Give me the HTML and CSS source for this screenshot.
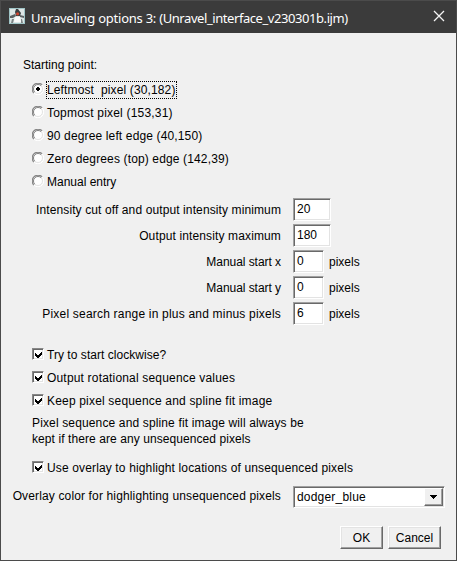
FILE: index.html
```html
<!DOCTYPE html>
<html lang="en">
<head>
<meta charset="utf-8">
<title>Unraveling options 3</title>
<link rel="stylesheet" href="styles.css">
</head>
<body>
<div class="window">
  <header class="titlebar">
    <svg class="app-icon" width="16" height="16" viewBox="0 0 16 16">
      <path fill="#dde6e6" d="M0 0h16v16H0z"/>
      <path fill="#9fc4c6" d="M0 0h16v1H0zM0 1h1v15H0zM15 1h1v15h-1zM1 15h14v1H1z"/>
      <path fill="#3c4042" d="M7 1h2l3 4-1 3H7L6 4z"/>
      <path fill="#5d6264" d="M1 8l5-2 1 2-3 2H1zM11 7l4 1v2l-4-1z"/>
      <path fill="#fafafa" d="M6 9h5l1 5H5z"/>
      <path fill="#7d8485" d="M3 11h2l-1 4H2zM12 11h1l1 4h-2z"/>
      <circle cx="8.6" cy="5.8" r="1.6" fill="#cf4430"/>
    </svg>
    <h1 class="title"><span class="t1">Unraveling options 3: </span><span class="t2">(Unravel_interface_v230301b.ijm)</span></h1>
    <svg class="close" width="12" height="12" viewBox="0 0 12 12"><path d="M1 1l10 10M11 1L1 11" fill="none" stroke="#f4f4f4" stroke-width="1.3"/></svg>
  </header>
  <main class="content">
    <div class="heading">Starting point:</div>
    <div class="option"><svg class="radio" width="12" height="12" viewBox="0 0 12 12"><use href="#radio"/><path d="M5 4h2v1h1v2H7v1H5V7H4V5h1z"/></svg><span class="s2 focused">Leftmost&nbsp; pixel (30,182)</span></div>
    <div class="option"><svg class="radio" width="12" height="12" viewBox="0 0 12 12"><use href="#radio"/></svg><span class="s3">Topmost pixel (153,31)</span></div>
    <div class="option"><svg class="radio" width="12" height="12" viewBox="0 0 12 12"><use href="#radio"/></svg><span class="s4">90 degree left edge (40,150)</span></div>
    <div class="option"><svg class="radio" width="12" height="12" viewBox="0 0 12 12"><use href="#radio"/></svg><span class="s4">Zero degrees (top) edge (142,39)</span></div>
    <div class="option"><svg class="radio" width="12" height="12" viewBox="0 0 12 12"><use href="#radio"/></svg><span>Manual entry</span></div>
    <div class="fields">
      <div class="field"><span class="label"><span class="s7">Intensity cut off and output intensity minimum</span></span><span class="input wide">20</span></div>
      <div class="field"><span class="label"><span class="s2">Output intensity maximum</span></span><span class="input wide">180</span></div>
      <div class="field"><span class="label"><span class="s9">Manual start x</span></span><span class="input">0</span><span class="unit">pixels</span></div>
      <div class="field"><span class="label"><span class="s9">Manual start y</span></span><span class="input">0</span><span class="unit">pixels</span></div>
      <div class="field"><span class="label"><span class="s10">Pixel search range in plus and minus pixels</span></span><span class="input">6</span><span class="unit">pixels</span></div>
    </div>
    <div class="option"><span class="check"><svg width="7" height="7" viewBox="0 0 7 7"><use href="#tick"/></svg></span><span class="s11">Try to start clockwise?</span></div>
    <div class="option"><span class="check"><svg width="7" height="7" viewBox="0 0 7 7"><use href="#tick"/></svg></span><span class="s12">Output rotational sequence values</span></div>
    <div class="option"><span class="check"><svg width="7" height="7" viewBox="0 0 7 7"><use href="#tick"/></svg></span><span class="s12">Keep pixel sequence and spline fit image</span></div>
    <div class="note"><div><span class="s4">Pixel sequence and spline fit image will always be</span></div><div><span class="s15">kept if there are any unsequenced pixels</span></div></div>
    <div class="option"><span class="check"><svg width="7" height="7" viewBox="0 0 7 7"><use href="#tick"/></svg></span><span class="s4">Use overlay to highlight locations of unsequenced pixels</span></div>
    <div class="field color"><span class="label"><span class="s4">Overlay color for highlighting unsequenced pixels</span></span>
      <span class="select"><span class="value s10">dodger_blue</span><span class="arrow"><svg width="7" height="4" viewBox="0 0 7 4" shape-rendering="crispEdges"><path d="M0 0h7v1H0zM1 1h5v1H1zM2 2h3v1H2zM3 3h1v1H3z"/></svg></span></span>
    </div>
    <div class="actions"><div class="button ok">OK</div><div class="button cancel">Cancel</div></div>
  </main>
</div>
<svg class="defs" width="0" height="0">
  <defs>
    <g id="radio"><circle cx="6" cy="6" r="5" fill="#fff"/><path d="M1.9 10.1A5.5 5.5 0 0 1 10.1 1.9" fill="none" stroke="#858585" stroke-width="1.2"/><path d="M2.8 9.2A4.5 4.5 0 0 1 9.2 2.8" fill="none" stroke="#707070" stroke-width=".9"/><path d="M10.1 1.9A5.5 5.5 0 0 1 1.9 10.1" fill="none" stroke="#fff"/><path d="M9.2 2.8A4.5 4.5 0 0 1 2.8 9.2" fill="none" stroke="#e3e3e3"/></g>
    <path id="tick" d="M0 2v3l2 2h1l4-4V0L3 4H2z" shape-rendering="crispEdges"/>
  </defs>
</svg>
</body>
</html>
```
FILE: styles.css
```css
* { box-sizing: border-box; }
body { margin: 0; font: 12px/16px "Liberation Sans", Arial, sans-serif; color: #000; }
.window { width: 457px; height: 561px; border: 1px solid #4b4b4b; background: #f0f0f0; overflow: hidden; }
.titlebar { height: 32px; display: flex; align-items: center; background: #3b3b3b; padding: 0 11px 0 8px; }
.app-icon { flex: none; margin-bottom: 2px; }
.title { flex: 1; margin: 1px 0 0 6px; font: 13px/20px "Noto Sans", sans-serif; color: #fff; white-space: nowrap; }
.close { margin-bottom: 2px; }
.content { padding-top: 24px; white-space: nowrap; }
.heading { padding-left: 22px; height: 21px; }
.option { height: 23px; display: flex; align-items: center; padding-left: 31px; }
.option > span:last-child { margin-left: 3px; }
.radio { flex: none; margin-bottom: 1px; }
.focused { outline: 1px dotted #000; outline-offset: 0; }
.check { width: 12px; height: 12px; margin-bottom: 1px; background: #fff; border: 1px solid; border-color: #888 #fff #fff #888; box-shadow: inset 1px 1px #696969, inset -1px -1px #e3e3e3; display: flex; align-items: center; justify-content: center; }
.fields { padding: 5px 0 15px; }
.field { height: 26px; display: flex; align-items: flex-start; }
.label { width: 280px; text-align: right; padding-top: 4px; }
.input { width: 31px; height: 23px; margin-left: 12px; padding: 2px 0 0 3px; background: #fff; border: 1px solid; border-color: #a0a0a0 #fff #fff #a0a0a0; box-shadow: inset 1px 1px #696969, inset -1px -1px #e3e3e3; }
.wide { width: 38px; }
.unit { margin-left: 5px; padding-top: 4px; }
.note { padding: 3px 0 9px 31px; }
.color { padding-top: 7px; height: 47px; }
.color .label { padding-top: 2px; }
.select { width: 152px; height: 22px; margin-left: 12px; padding: 1px 1px 1px 3px; display: flex; justify-content: space-between; background: #fff; border: 1px solid; border-color: #a0a0a0 #fff #fff #a0a0a0; box-shadow: inset 1px 1px #696969, inset -1px -1px #e3e3e3; }
.value { padding-top: 1px; }
.arrow { width: 19px; height: 18px; display: flex; align-items: center; justify-content: center; background: #f0f0f0; border: 1px solid; border-color: #fff #696969 #696969 #fff; box-shadow: inset -1px -1px #a0a0a0; }
.actions { display: flex; justify-content: flex-end; gap: 5px; padding-right: 15px; }
.button { height: 23px; padding-top: 3px; text-align: center; border: 1px solid; border-color: #fff #696969 #696969 #fff; box-shadow: inset -1px -1px #a0a0a0, inset 1px 1px #e3e3e3; }
.ok { width: 43px; }
.cancel { width: 53px; }
.defs { position: absolute; }

/* Tracking per label */
.t1 { letter-spacing: -0.25px; }
.t2 { letter-spacing: -0.43px; }
.s2 { letter-spacing: 0.13px; }
.s3 { letter-spacing: 0.2px; }
.s4 { letter-spacing: 0.14px; }
.s7 { letter-spacing: 0.11px; }
.s9 { letter-spacing: -0.05px; }
.s10 { letter-spacing: 0.2px; }
.s11 { letter-spacing: 0.04px; }
.s12 { letter-spacing: 0.18px; }
.s15 { letter-spacing: 0.08px; }
```
